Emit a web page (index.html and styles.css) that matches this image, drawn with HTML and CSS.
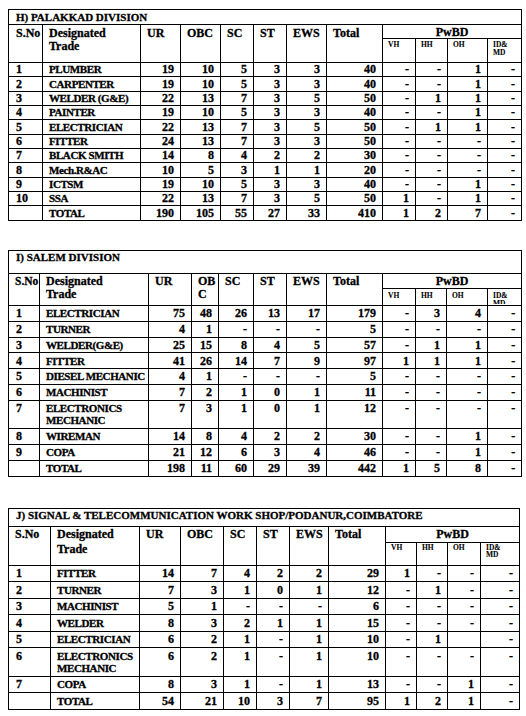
FILE: index.html
```html
<!DOCTYPE html>
<html lang="en">
<head>
<meta charset="utf-8">
<title>Division-wise vacancies</title>
<link rel="stylesheet" href="styles.css">
</head>
<body>
<div class="page">

<table class="grid t-h">
<colgroup><col><col><col><col><col><col><col><col><col><col><col><col></colgroup>
<thead>
<tr class="title"><td colspan="12">H) PALAKKAD DIVISION</td></tr>
<tr class="hd1">
<th rowspan="2" class="sno">S.No</th><th rowspan="2">Designated<br>Trade</th><th rowspan="2">UR</th><th rowspan="2">OBC</th><th rowspan="2">SC</th><th rowspan="2">ST</th><th rowspan="2">EWS</th><th rowspan="2">Total</th><th colspan="4" class="pwbd">PwBD</th>
</tr>
<tr class="hd2"><th class="sub">VH</th><th class="sub">HH</th><th class="sub">OH</th><th class="sub">ID&amp;<br>MD</th></tr>
</thead>
<tbody>
<tr><td>1</td><td>PLUMBER</td><td>19</td><td>10</td><td>5</td><td>3</td><td>3</td><td>40</td><td>-</td><td>-</td><td>1</td><td>-</td></tr>
<tr><td>2</td><td>CARPENTER</td><td>19</td><td>10</td><td>5</td><td>3</td><td>3</td><td>40</td><td>-</td><td>-</td><td>1</td><td>-</td></tr>
<tr><td>3</td><td>WELDER (G&amp;E)</td><td>22</td><td>13</td><td>7</td><td>3</td><td>5</td><td>50</td><td>-</td><td>1</td><td>1</td><td>-</td></tr>
<tr><td>4</td><td>PAINTER</td><td>19</td><td>10</td><td>5</td><td>3</td><td>3</td><td>40</td><td>-</td><td>-</td><td>1</td><td>-</td></tr>
<tr><td>5</td><td>ELECTRICIAN</td><td>22</td><td>13</td><td>7</td><td>3</td><td>5</td><td>50</td><td>-</td><td>1</td><td>1</td><td>-</td></tr>
<tr><td>6</td><td>FITTER</td><td>24</td><td>13</td><td>7</td><td>3</td><td>3</td><td>50</td><td>-</td><td>-</td><td>-</td><td>-</td></tr>
<tr><td>7</td><td>BLACK SMITH</td><td>14</td><td>8</td><td>4</td><td>2</td><td>2</td><td>30</td><td>-</td><td>-</td><td>-</td><td>-</td></tr>
<tr><td>8</td><td>Mech.R&amp;AC</td><td>10</td><td>5</td><td>3</td><td>1</td><td>1</td><td>20</td><td>-</td><td>-</td><td>-</td><td>-</td></tr>
<tr><td>9</td><td>ICTSM</td><td>19</td><td>10</td><td>5</td><td>3</td><td>3</td><td>40</td><td>-</td><td>-</td><td>1</td><td>-</td></tr>
<tr><td>10</td><td>SSA</td><td>22</td><td>13</td><td>7</td><td>3</td><td>5</td><td>50</td><td>1</td><td>-</td><td>1</td><td>-</td></tr>
<tr><td></td><td>TOTAL</td><td>190</td><td>105</td><td>55</td><td>27</td><td>33</td><td>410</td><td>1</td><td>2</td><td>7</td><td>-</td></tr>
</tbody>
</table>

<table class="grid t-i">
<colgroup><col><col><col><col><col><col><col><col><col><col><col><col></colgroup>
<thead>
<tr class="title"><td colspan="12">I) SALEM DIVISION</td></tr>
<tr class="hd1">
<th rowspan="2" class="sno">S.No</th><th rowspan="2">Designated<br>Trade</th><th rowspan="2">UR</th><th rowspan="2" class="narrow">OBC</th><th rowspan="2">SC</th><th rowspan="2">ST</th><th rowspan="2">EWS</th><th rowspan="2">Total</th><th colspan="4" class="pwbd">PwBD</th>
</tr>
<tr class="hd2"><th class="sub">VH</th><th class="sub">HH</th><th class="sub">OH</th><th class="sub"><div class="clip">ID&amp;<br>MD</div></th></tr>
</thead>
<tbody>
<tr><td>1</td><td>ELECTRICIAN</td><td>75</td><td>48</td><td>26</td><td>13</td><td>17</td><td>179</td><td>-</td><td>3</td><td>4</td><td>-</td></tr>
<tr><td>2</td><td>TURNER</td><td>4</td><td>1</td><td>-</td><td>-</td><td>-</td><td>5</td><td>-</td><td>-</td><td>-</td><td>-</td></tr>
<tr><td>3</td><td>WELDER(G&amp;E)</td><td>25</td><td>15</td><td>8</td><td>4</td><td>5</td><td>57</td><td>-</td><td>1</td><td>1</td><td>-</td></tr>
<tr><td>4</td><td>FITTER</td><td>41</td><td>26</td><td>14</td><td>7</td><td>9</td><td>97</td><td>1</td><td>1</td><td>1</td><td>-</td></tr>
<tr><td>5</td><td>DIESEL MECHANIC</td><td>4</td><td>1</td><td>-</td><td>-</td><td>-</td><td>5</td><td>-</td><td>-</td><td>-</td><td>-</td></tr>
<tr><td>6</td><td>MACHINIST</td><td>7</td><td>2</td><td>1</td><td>0</td><td>1</td><td>11</td><td>-</td><td>-</td><td>-</td><td>-</td></tr>
<tr><td>7</td><td>ELECTRONICS<br>MECHANIC</td><td>7</td><td>3</td><td>1</td><td>0</td><td>1</td><td>12</td><td>-</td><td>-</td><td>-</td><td>-</td></tr>
<tr><td>8</td><td>WIREMAN</td><td>14</td><td>8</td><td>4</td><td>2</td><td>2</td><td>30</td><td>-</td><td>-</td><td>1</td><td>-</td></tr>
<tr><td>9</td><td>COPA</td><td>21</td><td>12</td><td>6</td><td>3</td><td>4</td><td>46</td><td>-</td><td>-</td><td>1</td><td>-</td></tr>
<tr><td></td><td>TOTAL</td><td>198</td><td>11</td><td>60</td><td>29</td><td>39</td><td>442</td><td>1</td><td>5</td><td>8</td><td>-</td></tr>
</tbody>
</table>

<table class="grid t-j">
<colgroup><col><col><col><col><col><col><col><col><col><col><col><col></colgroup>
<thead>
<tr class="title"><td colspan="12">J) SIGNAL &amp; TELECOMMUNICATION WORK SHOP/PODANUR,COIMBATORE</td></tr>
<tr class="hd1">
<th rowspan="2" class="sno">S.No</th><th rowspan="2">Designated<br>Trade</th><th rowspan="2">UR</th><th rowspan="2">OBC</th><th rowspan="2">SC</th><th rowspan="2">ST</th><th rowspan="2">EWS</th><th rowspan="2">Total</th><th colspan="4" class="pwbd">PwBD</th>
</tr>
<tr class="hd2"><th class="sub">VH</th><th class="sub">HH</th><th class="sub">OH</th><th class="sub">ID&amp;<br>MD</th></tr>
</thead>
<tbody>
<tr><td>1</td><td>FITTER</td><td>14</td><td>7</td><td>4</td><td>2</td><td>2</td><td>29</td><td>1</td><td>-</td><td>-</td><td>-</td></tr>
<tr><td>2</td><td>TURNER</td><td>7</td><td>3</td><td>1</td><td>0</td><td>1</td><td>12</td><td>-</td><td>1</td><td>-</td><td>-</td></tr>
<tr><td>3</td><td>MACHINIST</td><td>5</td><td>1</td><td>-</td><td>-</td><td>-</td><td>6</td><td>-</td><td>-</td><td>-</td><td>-</td></tr>
<tr><td>4</td><td>WELDER</td><td>8</td><td>3</td><td>2</td><td>1</td><td>1</td><td>15</td><td>-</td><td>-</td><td>-</td><td>-</td></tr>
<tr><td>5</td><td>ELECTRICIAN</td><td>6</td><td>2</td><td>1</td><td>-</td><td>1</td><td>10</td><td>-</td><td>1</td><td></td><td>-</td></tr>
<tr><td>6</td><td>ELECTRONICS<br>MECHANIC</td><td>6</td><td>2</td><td>1</td><td>-</td><td>1</td><td>10</td><td>-</td><td>-</td><td>-</td><td>-</td></tr>
<tr><td>7</td><td>COPA</td><td>8</td><td>3</td><td>1</td><td>-</td><td>1</td><td>13</td><td>-</td><td>-</td><td>1</td><td>-</td></tr>
<tr><td></td><td>TOTAL</td><td>54</td><td>21</td><td>10</td><td>3</td><td>7</td><td>95</td><td>1</td><td>2</td><td>1</td><td>-</td></tr>
</tbody>
</table>

</div>
</body>
</html>
```

FILE: styles.css
```css
html, body {
  margin: 0;
  background: #fff;
}

body {
  color: #000;
  font-family: "Liberation Serif", "Times New Roman", serif;
  font-weight: bold;
  font-size: 12px;
}

.page {
  padding: 9px 0 0 8px;
}

.grid {
  border-collapse: collapse;
  table-layout: fixed;
}

.grid td,
.grid th {
  border: 1px solid #000;
  padding: 0 6px;
  vertical-align: top;
  text-align: left;
  font-weight: bold;
  white-space: nowrap;
  -webkit-text-stroke: 0.3px #000;
}

/* data rows */
.grid tbody td {
  font-size: 12px;
  line-height: 12px;
}

.grid tbody td:nth-child(n+3) {
  text-align: right;
}

.grid tbody td:first-child {
  padding-left: 7px;
}

.grid tbody td:nth-child(2) {
  font-size: 11px;
  letter-spacing: -0.4px;
  padding-right: 1px;
}

.grid .sno {
  padding-left: 7px;
}

/* titles */
.grid .title td {
  font-size: 11px;
  line-height: 13px;
  padding-left: 7px;
}

/* header rows */
.grid .hd1 th {
  font-size: 12px;
}

.grid .hd1 .pwbd {
  text-align: center;
  line-height: 11px;
}

.grid .hd2 .sub {
  font-size: 7.5px;
  line-height: 7.7px;
  padding-left: 5px;
  padding-right: 2px;
  -webkit-text-stroke: 0.1px #000;
}

.clip {
  height: 12px;
  overflow: hidden;
}

.grid .narrow {
  padding-right: 2px;
  white-space: normal;
  word-break: break-all;
}

/* ---------- H) Palakkad ---------- */
.t-h { width: 513px; }
.t-h col:nth-child(1) { width: 34px; }
.t-h col:nth-child(2) { width: 98px; }
.t-h col:nth-child(3) { width: 40px; }
.t-h col:nth-child(4) { width: 40px; }
.t-h col:nth-child(5) { width: 33px; }
.t-h col:nth-child(6) { width: 33px; }
.t-h col:nth-child(7) { width: 40px; }
.t-h col:nth-child(8) { width: 56px; }
.t-h col:nth-child(9) { width: 33px; }
.t-h col:nth-child(10) { width: 32px; }
.t-h col:nth-child(11) { width: 40px; }
.t-h col:nth-child(12) { width: 34px; }

.t-h .title td { padding-top: 0.5px; padding-bottom: 0.5px; }
.t-h .hd1 th { line-height: 13.4px; padding-top: 1.5px; }
.t-h .hd1 .pwbd { line-height: 11px; padding-top: 1.5px; padding-bottom: 0; }
.t-h .hd2 .sub { padding-top: 2.6px; padding-bottom: 5.5px; }
.t-h tbody td { padding-top: 0.3px; padding-bottom: 1.06px; }

/* ---------- I) Salem ---------- */
.t-i { width: 513px; margin-top: 29px; }
.t-i col:nth-child(1) { width: 31px; }
.t-i col:nth-child(2) { width: 109px; }
.t-i col:nth-child(3) { width: 43px; }
.t-i col:nth-child(4) { width: 27px; }
.t-i col:nth-child(5) { width: 35px; }
.t-i col:nth-child(6) { width: 33px; }
.t-i col:nth-child(7) { width: 40px; }
.t-i col:nth-child(8) { width: 56px; }
.t-i col:nth-child(9) { width: 33px; }
.t-i col:nth-child(10) { width: 31px; }
.t-i col:nth-child(11) { width: 41px; }
.t-i col:nth-child(12) { width: 34px; }

.t-i .title td { padding-top: 0; padding-bottom: 9px; }
.t-i .hd1 th { line-height: 13px; padding-top: 1px; }
.t-i .hd1 .sno { font-size: 11.5px; padding-left: 6px; padding-right: 0; }
.t-i .hd1 .pwbd { line-height: 11px; padding-top: 2px; padding-bottom: 1px; }
.t-i .hd2 .sub { line-height: 8px; padding-top: 3.4px; padding-bottom: 0.6px; }
.t-i tbody td { padding-top: 1.2px; padding-bottom: 1.7px; }

/* ---------- J) S&T Workshop ---------- */
.t-j { width: 511px; margin-top: 31px; }
.t-j col:nth-child(1) { width: 42px; }
.t-j col:nth-child(2) { width: 89px; }
.t-j col:nth-child(3) { width: 41px; }
.t-j col:nth-child(4) { width: 43px; }
.t-j col:nth-child(5) { width: 33px; }
.t-j col:nth-child(6) { width: 33px; }
.t-j col:nth-child(7) { width: 39px; }
.t-j col:nth-child(8) { width: 57px; }
.t-j col:nth-child(9) { width: 31px; }
.t-j col:nth-child(10) { width: 31px; }
.t-j col:nth-child(11) { width: 33px; }
.t-j col:nth-child(12) { width: 39px; }

.t-j .title td { padding-top: 0; padding-bottom: 4px; }
.t-j .hd1 th { line-height: 15px; padding-top: 0; }
.t-j .hd1 .sno { padding-left: 6px; }
.t-j .hd1 .pwbd { line-height: 11px; padding-top: 2px; padding-bottom: 2px; }
.t-j .hd2 .sub { line-height: 7.5px; padding-top: 1.4px; padding-bottom: 5.6px; }
.t-j tbody td { padding-top: 1.5px; padding-bottom: 2px; }
```
